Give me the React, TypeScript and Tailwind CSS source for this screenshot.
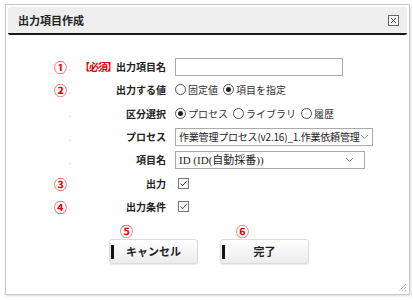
const rows = [
  { mark: '①', label: '出力項目名', required: true, control: 'input' },
  { mark: '②', label: '出力する値', control: 'value' },
  { mark: '', label: '区分選択', control: 'kind' },
  { mark: '', label: 'プロセス', control: 'process' },
  { mark: '', label: '項目名', control: 'item' },
  { mark: '③', label: '出力', control: 'check' },
  { mark: '④', label: '出力条件', control: 'check' },
];

function Radio({ checked, label }: { checked?: boolean; label: string }) {
  return (
    <span className="flex items-center gap-[2px] mr-[5px]">
      <span className="w-[11px] h-[11px] rounded-full border border-[#555] flex items-center justify-center bg-white">
        {checked && <span className="w-[5px] h-[5px] rounded-full bg-[#222]" />}
      </span>
      <span>{label}</span>
    </span>
  );
}

function Chevron() {
  return (
    <svg width="9" height="6" viewBox="0 0 9 6" className="text-[#888] shrink-0">
      <path d="M1 1 L4.5 4.5 L8 1" fill="none" stroke="currentColor" strokeWidth="1" />
    </svg>
  );
}

function Check() {
  return (
    <span className="w-[11px] h-[11px] border border-[#777] bg-white flex items-center justify-center ml-[3px]">
      <svg width="9" height="9" viewBox="0 0 9 9">
        <path d="M1.5 4.5 L3.5 6.8 L7.8 1.8" fill="none" stroke="#444" strokeWidth="1" />
      </svg>
    </span>
  );
}

function Control({ type }: { type: string }) {
  if (type === 'input') {
    return <div className="w-[168px] h-[18px] border border-[#aaa] bg-white" />;
  }
  if (type === 'value') {
    return (
      <div className="flex items-center text-[10px] text-[#333]">
        <Radio label="固定値" />
        <Radio checked label="項目を指定" />
      </div>
    );
  }
  if (type === 'kind') {
    return (
      <div className="flex items-center text-[10px] text-[#333]">
        <Radio checked label="プロセス" />
        <Radio label="ライブラリ" />
        <Radio label="履歴" />
      </div>
    );
  }
  if (type === 'process') {
    return (
      <div className="w-[198px] h-[18px] border border-[#aaa] bg-white flex items-center justify-between pl-[3px] pr-[4px] text-[10px] text-[#222]">
        <span className="whitespace-nowrap tracking-[-0.2px]">作業管理プロセス(v2.16)_1.作業依頼管理</span>
        <Chevron />
      </div>
    );
  }
  if (type === 'item') {
    return (
      <div className="w-[190px] h-[18px] border border-[#aaa] bg-white flex items-center justify-between pl-[3px] pr-[10px] text-[11px] text-[#222]">
        <span className="whitespace-nowrap" style={{ fontFamily: '"Liberation Serif", "Noto Sans CJK JP", serif' }}>ID (ID(自動採番))</span>
        <Chevron />
      </div>
    );
  }
  return <Check />;
}

export default function App() {
  return (
    <div
      className="w-[413px] h-[300px] bg-white relative"
      style={{ fontFamily: '"Noto Sans CJK JP", "Noto Sans", sans-serif' }}
    >
      <div className="absolute left-[5px] top-[4px] w-[405px] h-[291px] border border-[#c8c8c8] shadow-[1px_1px_2px_rgba(0,0,0,0.15)] bg-white flex flex-col">
        <div className="mx-[2px] mt-[2px] h-[28px] bg-[#eeeeee] rounded-t-[3px] border-b-2 border-[#1a1a1a] rounded-b-[2px] flex items-center justify-between pl-[10px] pr-[8px]">
          <span className="text-[11px] font-bold text-[#222]">出力項目作成</span>
          <span className="w-[11px] h-[11px] border border-[#666] bg-[#f6f6f6] flex items-center justify-center">
            <svg width="7" height="7" viewBox="0 0 7 7">
              <path d="M1 1 L6 6 M6 1 L1 6" stroke="#444" strokeWidth="1" />
            </svg>
          </span>
        </div>

        <div className="flex flex-col mt-[20px]">
          {rows.map((r) => (
            <div key={r.label} className="flex items-center h-[23.3px]">
              <div className="w-[72px] shrink-0 flex items-center justify-start pl-[48px]">
                <span className="w-[14px] text-[13px] font-bold text-[#e00000] leading-none">{r.mark}</span>
                <span className="text-[6px] text-[#999] leading-none mt-[4px] ml-[1px]">.</span>
              </div>
              <div className="w-[88px] shrink-0 flex justify-end text-[10px] font-bold text-[#222] whitespace-nowrap">
                {r.required && <span className="text-[#e00000] tracking-[-1px]">【必須】</span>}
                <span>{r.label}</span>
              </div>
              <div className="ml-[9px] flex items-center">
                <Control type={r.control} />
              </div>
            </div>
          ))}
        </div>

        <div className="flex gap-[22px] ml-[103px] mt-[10px]">
          {['キャンセル', '完了'].map((t, i) => (
            <div key={t} className="relative w-[89px] pt-[11px]">
              <span className="absolute top-[-4px] text-[13px] font-bold text-[#e00000] leading-none" style={{ left: i === 0 ? 11 : 16 }}>
                {i === 0 ? '⑤' : '⑥'}
              </span>
              <div className="h-[25px] rounded-[3px] border border-[#dcdcdc] bg-gradient-to-b from-white to-[#ececec] flex items-center justify-center relative shadow-[0_1px_1px_rgba(0,0,0,0.08)]">
                <span className="absolute left-[1px] top-[5px] w-[3px] h-[14px] bg-[#111]" />
                <span className="text-[11px] font-bold text-[#222]">{t}</span>
              </div>
            </div>
          ))}
        </div>

        <svg width="10" height="10" viewBox="0 0 10 10" className="absolute right-[2px] bottom-[2px]">
          <path d="M9 2 L2 9 M9 5 L5 9 M9 8 L8 9" stroke="#5aa7e6" strokeWidth="1" strokeDasharray="1 1" />
        </svg>
      </div>
    </div>
  );
}
